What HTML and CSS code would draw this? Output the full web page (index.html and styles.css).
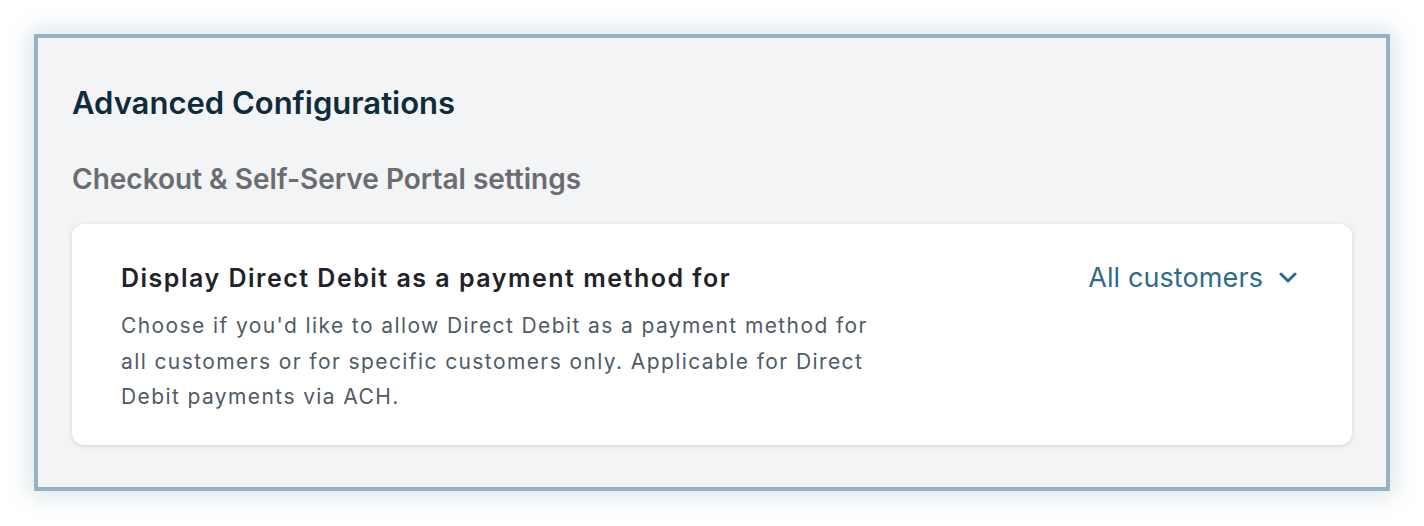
FILE: index.html
```html
<!DOCTYPE html>
<html>
<head>
    <meta charset="UTF-8">
    <title>Advanced Configurations</title>
    <link rel="stylesheet" href="styles.css">
</head>
<body>
    <div class="frame">
        <h1 class="title">Advanced Configurations</h1>
        <h2 class="subtitle">Checkout &amp; Self-Serve Portal settings</h2>

        <div class="card">
            <div class="card-text">
                <div class="card-title">Display Direct Debit as a payment method for</div>
                <p class="card-desc">Choose if you'd like to allow Direct Debit as a payment method for all customers or for specific customers only. Applicable for Direct Debit payments via ACH.</p>
            </div>
            <div class="picker">
                <span>All customers</span>
                <svg class="chevron" width="18" height="12" viewBox="0 0 18 12">
                    <path d="M2 2 L9 9 L16 2" fill="none" stroke="#2e6a8a" stroke-width="3" stroke-linecap="round" stroke-linejoin="round"/>
                </svg>
            </div>
        </div>
    </div>
</body>
</html>
```

FILE: styles.css
```css
html, body {
    margin: 0;
    padding: 0;
    background: #ffffff;
}

body {
    padding: 34px;
    font-family: Inter, "Noto Sans", sans-serif;
}

.frame {
    box-sizing: border-box;
    width: 1356px;
    height: 457px;
    border: 4px solid #94b4c4;
    background: #f3f4f6;
    padding: 46px 34px 0 34px;
    box-shadow: 0 0 22px 4px rgba(120, 150, 170, 0.28);
}

.title {
    margin: 0;
    font-size: 31px;
    font-weight: 600;
    color: #0f2c3b;
    line-height: 38px;
}

.subtitle {
    margin: 40px 0 0 0;
    font-size: 28px;
    font-weight: 600;
    color: #6b6c70;
    line-height: 34px;
}

.card {
    margin-top: 28px;
    background: #ffffff;
    border-radius: 12px;
    box-shadow: 0 1px 5px rgba(0, 0, 0, 0.14);
    padding: 38px 55px 30px 49px;
    display: flex;
    justify-content: space-between;
    align-items: flex-start;
}

.card-title {
    font-size: 25px;
    font-weight: 600;
    letter-spacing: 1.5px;
    color: #1f2329;
    line-height: 32px;
}

.card-desc {
    margin: 14px 0 0 0;
    width: 760px;
    font-size: 21px;
    letter-spacing: 1.4px;
    line-height: 35.5px;
    color: #4f5b67;
}

.picker {
    display: flex;
    align-items: center;
    gap: 16px;
    color: #2e6a8a;
    font-size: 27px;
    letter-spacing: 0.1px;
    line-height: 32px;
}

.chevron {
    display: block;
}
```
